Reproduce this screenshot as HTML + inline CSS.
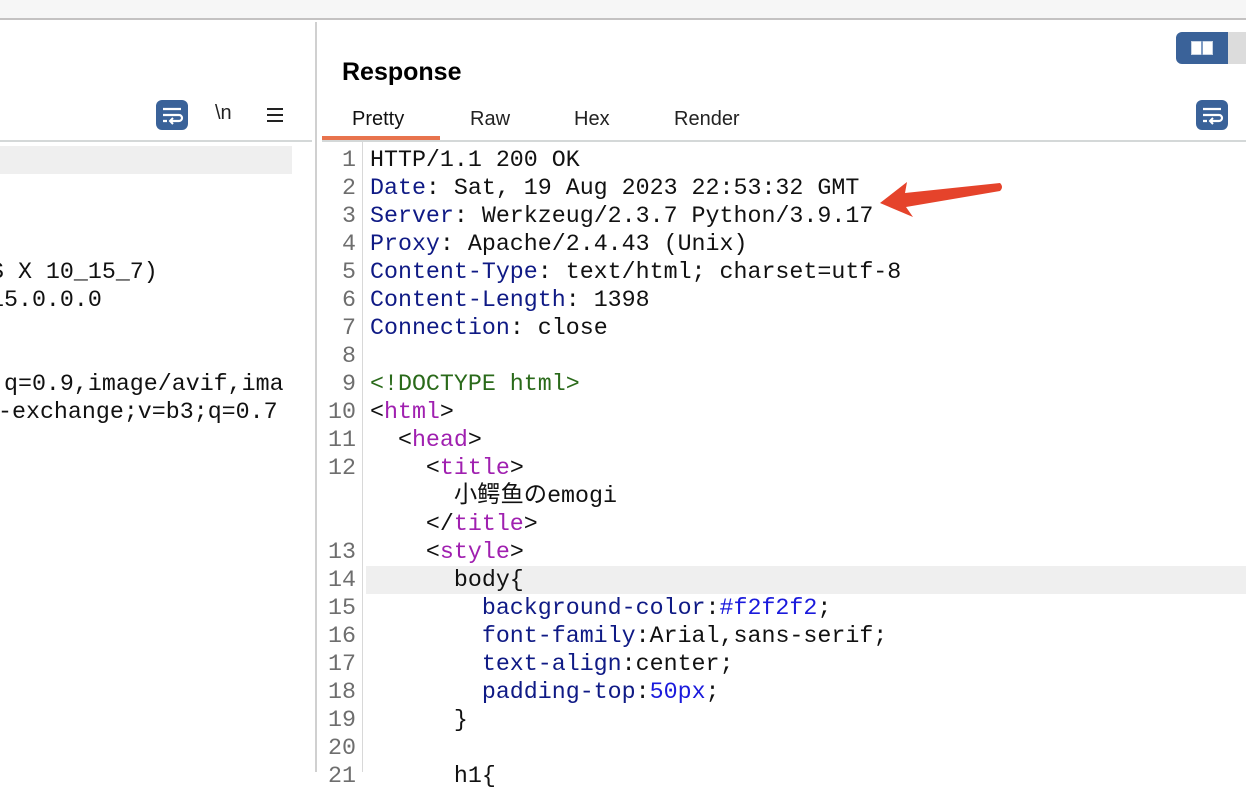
<!DOCTYPE html>
<html><head><meta charset="utf-8"><style>
*{margin:0;padding:0;box-sizing:border-box}
body{width:1246px;height:772px;overflow:hidden;background:#fff;position:relative;font-family:"Liberation Sans",sans-serif}
.abs{position:absolute}
.mono{font-family:"Liberation Mono","Noto Sans CJK JP",monospace;font-size:23.3px;white-space:pre;line-height:28px}
.ln{position:absolute;left:322px;width:34px;text-align:right;color:#6e6e6e}
.cl{position:absolute;left:370px;color:#111}
.n{color:#0f1a85}.t{color:#a020b0}.g{color:#2a6a1a}.b{color:#1a1adc}
.ico{position:absolute;width:32px;height:30px;background:#3a6299;border-radius:6px}
</style></head><body>
<div class="abs" style="left:0;top:0;width:1246px;height:20px;background:#f6f6f6;border-bottom:2px solid #c4c2c2"></div>
<div class="abs" style="left:315px;top:22px;width:2px;height:750px;background:#d0d0d0"></div>
<!-- left panel -->
<div class="ico" style="left:156px;top:100px"><svg width="32" height="30"><path d="M7 9h18M7 15h16a3 3 0 0 1 0 6h-8M7 21h4" stroke="#fff" stroke-width="2.2" fill="none"/><path d="M17 18l-3 3 3 3" stroke="#fff" stroke-width="2" fill="none"/></svg></div>
<div class="abs" style="left:215px;top:102px;font-size:20px;color:#222">\n</div>
<div class="abs" style="left:267px;top:108px;width:16px;height:14px;border-top:2px solid #222;border-bottom:2px solid #222"><div style="margin-top:4px;border-top:2px solid #222"></div></div>
<div class="abs" style="left:0;top:140px;width:312px;height:2px;background:#d4d8d8"></div>
<div class="abs" style="left:0;top:146px;width:292px;height:28px;background:#efefef"></div>
<div class="abs mono" style="left:-10px;top:258px;color:#111">S X 10_15_7)</div>
<div class="abs mono" style="left:-10px;top:286px;color:#111">15.0.0.0</div>
<div class="abs mono" style="left:-10px;top:370px;color:#111"> q=0.9,image/avif,ima</div>
<div class="abs mono" style="left:-2px;top:398px;color:#111">-exchange;v=b3;q=0.7</div>
<!-- right panel -->
<div class="abs" style="left:342px;top:58px;font-size:25px;font-weight:bold;color:#000">Response</div>
<div class="abs" style="left:1176px;top:32px;width:52px;height:32px;background:#3a6299;border-radius:6px 0 0 6px"><div style="position:absolute;left:15px;top:9px;width:22px;height:14px;background:#fff;border:1px solid #c8d4e4"></div><div style="position:absolute;left:25px;top:9px;width:2px;height:14px;background:#7f9cc4"></div></div>
<div class="abs" style="left:1228px;top:32px;width:18px;height:32px;background:#dcdcdc"></div>
<div class="ico" style="left:1196px;top:100px"><svg width="32" height="30"><path d="M7 9h18M7 15h16a3 3 0 0 1 0 6h-8M7 21h4" stroke="#fff" stroke-width="2.2" fill="none"/><path d="M17 18l-3 3 3 3" stroke="#fff" stroke-width="2" fill="none"/></svg></div>
<div class="abs" style="left:352px;top:108px;font-size:20px;color:#111">Pretty</div>
<div class="abs" style="left:470px;top:108px;font-size:20px;color:#222">Raw</div>
<div class="abs" style="left:574px;top:108px;font-size:20px;color:#222">Hex</div>
<div class="abs" style="left:674px;top:108px;font-size:20px;color:#222">Render</div>
<div class="abs" style="left:322px;top:136px;width:118px;height:4px;background:#e8734d"></div>
<div class="abs" style="left:322px;top:140px;width:924px;height:2px;background:#d4d8d8"></div>
<div class="abs" style="left:362px;top:142px;width:1px;height:630px;background:#d8d8d8"></div>
<div class="abs" style="left:366px;top:566px;width:880px;height:28px;background:#efefef"></div>
<div class="mono">
<div class="ln" style="top:146px">1</div><div class="cl" style="top:146px">HTTP/1.1 200 OK</div>
<div class="ln" style="top:174px">2</div><div class="cl" style="top:174px"><span class="n">Date</span>: Sat, 19 Aug 2023 22:53:32 GMT</div>
<div class="ln" style="top:202px">3</div><div class="cl" style="top:202px"><span class="n">Server</span>: Werkzeug/2.3.7 Python/3.9.17</div>
<div class="ln" style="top:230px">4</div><div class="cl" style="top:230px"><span class="n">Proxy</span>: Apache/2.4.43 (Unix)</div>
<div class="ln" style="top:258px">5</div><div class="cl" style="top:258px"><span class="n">Content-Type</span>: text/html; charset=utf-8</div>
<div class="ln" style="top:286px">6</div><div class="cl" style="top:286px"><span class="n">Content-Length</span>: 1398</div>
<div class="ln" style="top:314px">7</div><div class="cl" style="top:314px"><span class="n">Connection</span>: close</div>
<div class="ln" style="top:342px">8</div>
<div class="ln" style="top:370px">9</div><div class="cl g" style="top:370px">&lt;!DOCTYPE html&gt;</div>
<div class="ln" style="top:398px">10</div><div class="cl" style="top:398px">&lt;<span class="t">html</span>&gt;</div>
<div class="ln" style="top:426px">11</div><div class="cl" style="top:426px">  &lt;<span class="t">head</span>&gt;</div>
<div class="ln" style="top:454px">12</div><div class="cl" style="top:454px">    &lt;<span class="t">title</span>&gt;</div>
<div class="cl" style="top:482px">      小鳄鱼のemogi</div>
<div class="cl" style="top:510px">    &lt;/<span class="t">title</span>&gt;</div>
<div class="ln" style="top:538px">13</div><div class="cl" style="top:538px">    &lt;<span class="t">style</span>&gt;</div>
<div class="ln" style="top:566px">14</div><div class="cl" style="top:566px">      body{</div>
<div class="ln" style="top:594px">15</div><div class="cl" style="top:594px">        <span class="n">background-color</span>:<span class="b">#f2f2f2</span>;</div>
<div class="ln" style="top:622px">16</div><div class="cl" style="top:622px">        <span class="n">font-family</span>:Arial,sans-serif;</div>
<div class="ln" style="top:650px">17</div><div class="cl" style="top:650px">        <span class="n">text-align</span>:center;</div>
<div class="ln" style="top:678px">18</div><div class="cl" style="top:678px">        <span class="n">padding-top</span>:<span class="b">50px</span>;</div>
<div class="ln" style="top:706px">19</div><div class="cl" style="top:706px">      }</div>
<div class="ln" style="top:734px">20</div>
<div class="ln" style="top:762px">21</div><div class="cl" style="top:762px">      h1{</div>
</div>
<svg class="abs" style="left:0;top:0" width="1246" height="772"><path d="M880 203 L907 182 L905 193 L1000 183 Q1004 187 1000 191 L906 207 L913 217 Z" fill="#e5432b"/></svg>
</body></html>
